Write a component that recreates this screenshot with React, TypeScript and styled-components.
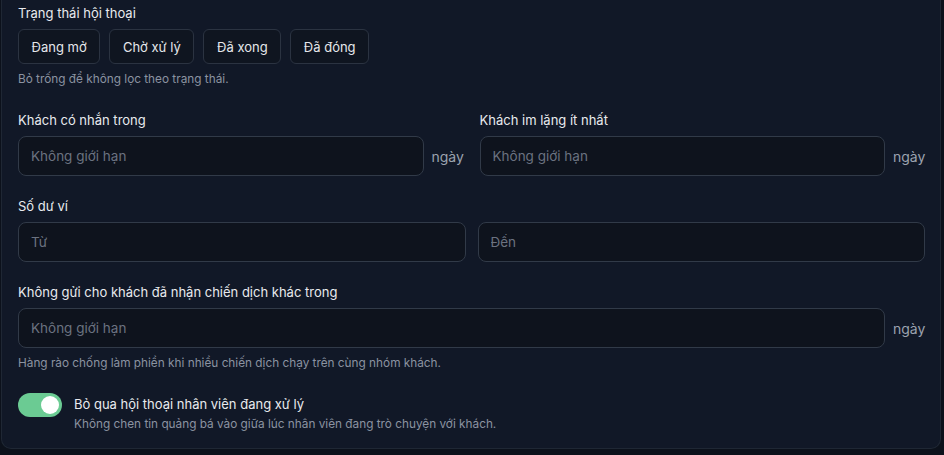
import React, { useState } from "react";
import styled, { createGlobalStyle } from "styled-components";

const Global = createGlobalStyle`
  html, body { margin: 0; padding: 0; background: #0c111b; }
  body { font-family: Inter, "Noto Sans", "Liberation Sans", sans-serif; -webkit-font-smoothing: antialiased; }
  * { box-sizing: border-box; }
`;

const Page = styled.div`
  padding: 0 3px 3px 1px;
  width: 944px;
  height: 455px;
  overflow: hidden;
`;

const Card = styled.div`
  background: #111827;
  border: 1px solid #1f2734;
  border-top: none;
  border-radius: 0 0 10px 10px;
  padding: 3px 15px 16px 16px;
  display: flex;
  flex-direction: column;
  gap: 20px;
`;

const Section = styled.div`
  display: flex;
  flex-direction: column;
`;

const Label = styled.div`
  font-size: 13px;
  line-height: 20px;
  font-weight: 400;
  color: #e8eaee;
  margin-bottom: 6px;
`;

const Hint = styled.div`
  font-size: 11.8px;
  line-height: 16px;
  color: #8b93a1;
  margin-top: 7px;
`;

const Chips = styled.div`
  display: flex;
  gap: 9px;
`;

const Chip = styled.button`
  height: 35px;
  padding: 0 12.6px;
  border-radius: 6px;
  border: 1px solid #2b3341;
  background: #0f1520;
  color: #e5e7eb;
  font-family: inherit;
  font-size: 13px;
  cursor: pointer;
`;

const TwoCol = styled.div<{ $gap: number }>`
  display: grid;
  grid-template-columns: 1fr 1fr;
  column-gap: ${(p) => p.$gap}px;
`;

const UnitRow = styled.div`
  display: flex;
  align-items: center;
  gap: 8px;
`;

const Input = styled.input`
  flex: 1;
  min-width: 0;
  width: 100%;
  height: 40px;
  border: 1px solid #313a48;
  border-radius: 8px;
  background: #0e131d;
  padding: 0 12px;
  font-family: inherit;
  font-size: 13.5px;
  color: #e5e7eb;
  outline: none;
  &::placeholder { color: #6b7280; }
`;

const Unit = styled.span`
  font-size: 14px;
  color: #9ca3af;
  width: 32px;
`;

const ToggleRow = styled.div`
  display: flex;
  gap: 12px;
  align-items: flex-start;
  margin-top: 2px;
`;

const Switch = styled.button<{ $on: boolean }>`
  position: relative;
  width: 44px;
  height: 24px;
  border-radius: 12px;
  border: none;
  padding: 0;
  flex-shrink: 0;
  background: ${(p) => (p.$on ? "#6bcb93" : "#374151")};
  cursor: pointer;
  &::after {
    content: "";
    position: absolute;
    top: 3px;
    left: ${(p) => (p.$on ? "23px" : "3px")};
    width: 18px;
    height: 18px;
    border-radius: 50%;
    background: #ffffff;
  }
`;

const ToggleText = styled.div`
  display: flex;
  flex-direction: column;
  gap: 2px;
`;

const ToggleTitle = styled.div`
  font-size: 13px;
  line-height: 20px;
  font-weight: 400;
  color: #e8eaee;
  margin-top: 1px;
`;

const ToggleSub = styled.div`
  font-size: 11.8px;
  line-height: 16px;
  color: #8b93a1;
`;

export default function App() {
  const [on, setOn] = useState(true);
  return (
    <>
      <Global />
      <Page>
        <Card>
          <Section>
            <Label>Trạng thái hội thoại</Label>
            <Chips>
              {["Đang mở", "Chờ xử lý", "Đã xong", "Đã đóng"].map((c) => (
                <Chip key={c}>{c}</Chip>
              ))}
            </Chips>
            <Hint>Bỏ trống để không lọc theo trạng thái.</Hint>
          </Section>

          <TwoCol $gap={16} style={{ marginTop: 3 }}>
            <Section>
              <Label>Khách có nhắn trong</Label>
              <UnitRow>
                <Input placeholder="Không giới hạn" />
                <Unit>ngày</Unit>
              </UnitRow>
            </Section>
            <Section>
              <Label>Khách im lặng ít nhất</Label>
              <UnitRow>
                <Input placeholder="Không giới hạn" />
                <Unit>ngày</Unit>
              </UnitRow>
            </Section>
          </TwoCol>

          <Section>
            <Label>Số dư ví</Label>
            <TwoCol $gap={12}>
              <Input placeholder="Từ" />
              <Input placeholder="Đến" />
            </TwoCol>
          </Section>

          <Section>
            <Label>Không gửi cho khách đã nhận chiến dịch khác trong</Label>
            <UnitRow>
              <Input placeholder="Không giới hạn" />
              <Unit>ngày</Unit>
            </UnitRow>
            <Hint>Hàng rào chống làm phiền khi nhiều chiến dịch chạy trên cùng nhóm khách.</Hint>
          </Section>

          <ToggleRow>
            <Switch $on={on} onClick={() => setOn(!on)} aria-label="toggle" />
            <ToggleText>
              <ToggleTitle>Bỏ qua hội thoại nhân viên đang xử lý</ToggleTitle>
              <ToggleSub>Không chen tin quảng bá vào giữa lúc nhân viên đang trò chuyện với khách.</ToggleSub>
            </ToggleText>
          </ToggleRow>
        </Card>
      </Page>
    </>
  );
}
